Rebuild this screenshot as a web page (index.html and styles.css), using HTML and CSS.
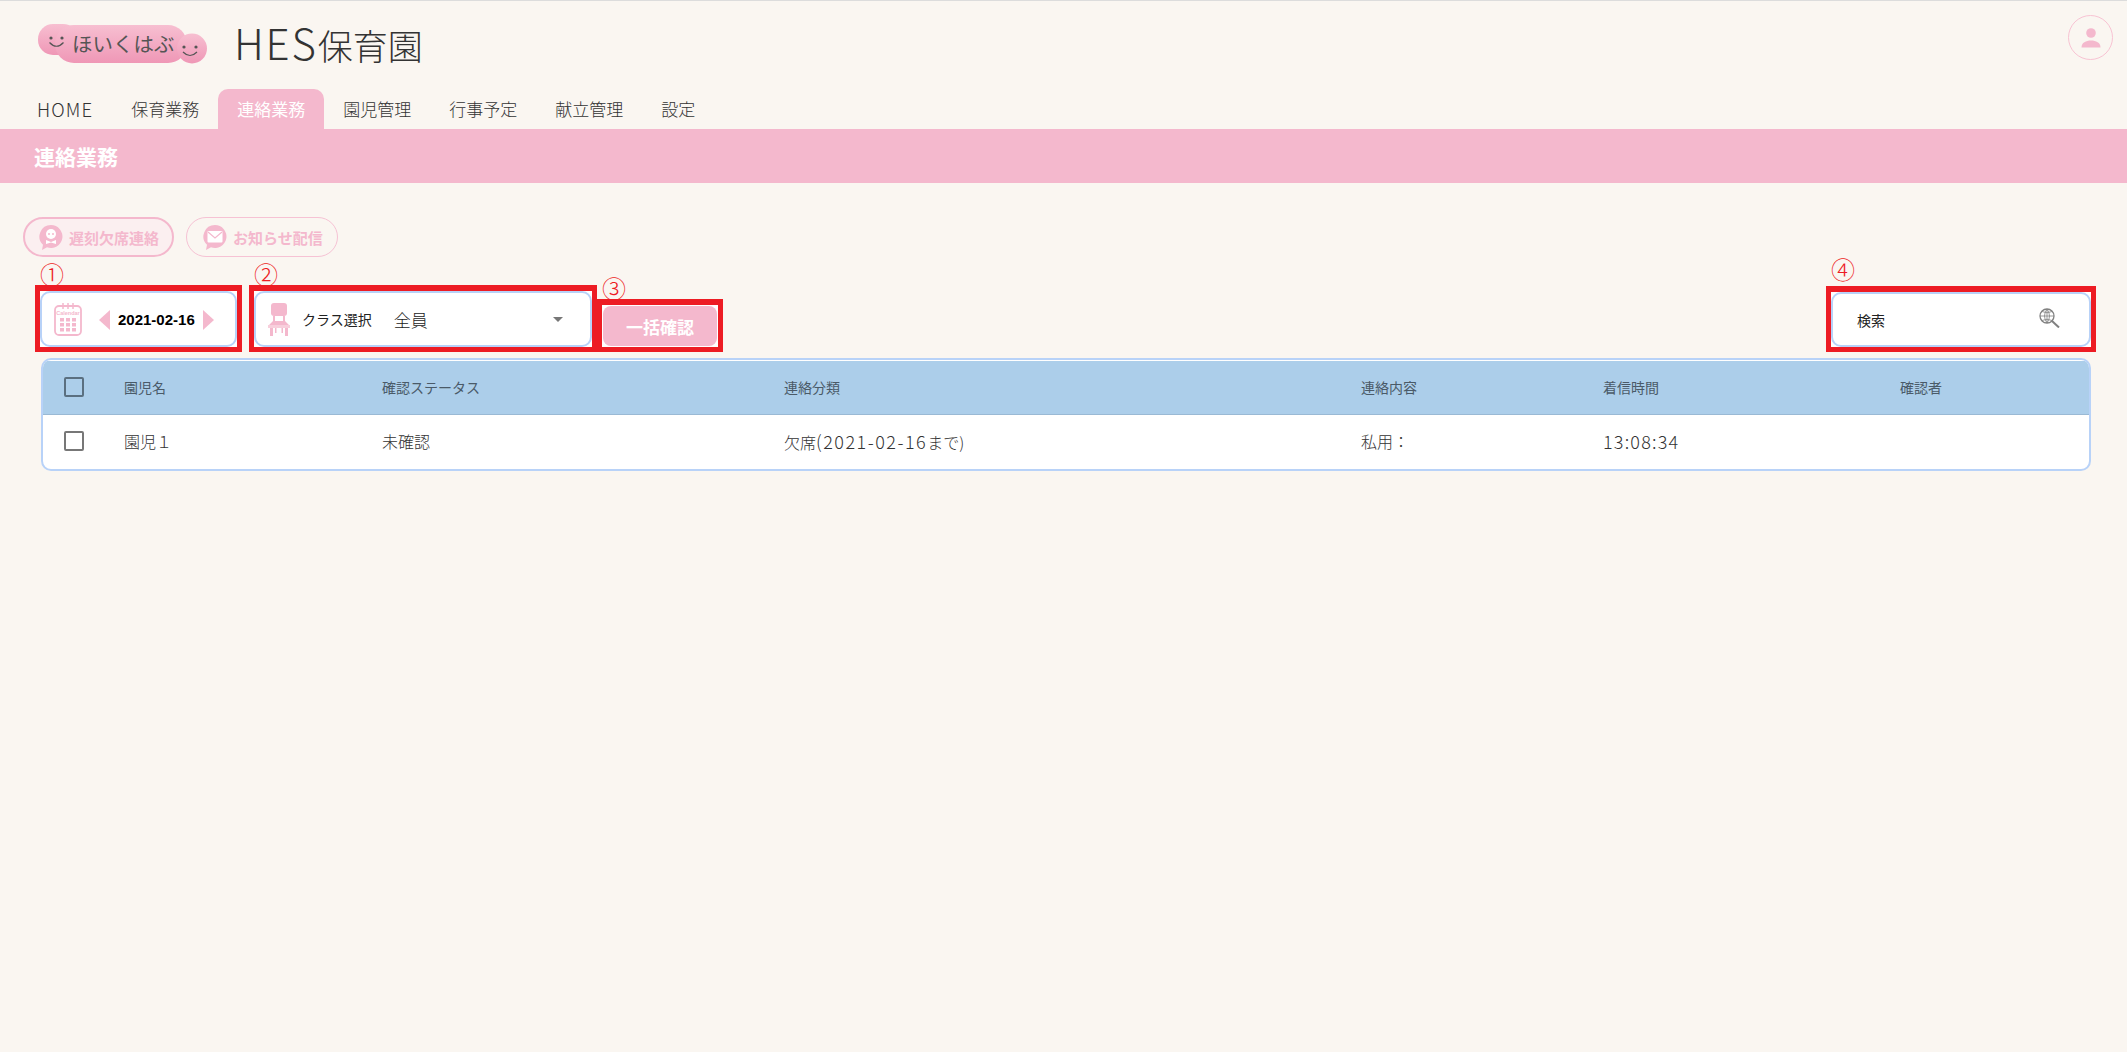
FILE: index.html
```html
<!DOCTYPE html>
<html lang="ja">
<head>
<meta charset="utf-8">
<title>HES保育園</title>
<link rel="stylesheet" href="styles.css">
</head>
<body>
<header class="top">
  <div class="brand">
    <svg class="logo" width="170" height="40" viewBox="0 0 170 40">
      <defs><linearGradient id="lg" x1="0" y1="0" x2="0" y2="1"><stop offset="0" stop-color="#f7bfd1"/><stop offset="1" stop-color="#ef97b6"/></linearGradient></defs>
      <g fill="url(#lg)">
        <rect x="0" y="0" width="40" height="31" rx="15"/>
        <rect x="17" y="1" width="132" height="38" rx="19"/>
        <circle cx="154" cy="24.5" r="15"/>
      </g>
      <g fill="#555"><circle cx="13" cy="14" r="1.6"/><circle cx="24" cy="14" r="1.6"/><circle cx="146" cy="23" r="1.6"/><circle cx="158" cy="23" r="1.6"/></g>
      <g fill="none" stroke="#555" stroke-width="1.2"><path d="M11.5 18.5Q18.5 26 25.5 18.5"/><path d="M145 28Q152 35 159 28"/></g>
      <text class="logo-text" x="34" y="28">ほいくはぶ</text>
    </svg>
    <h1 class="site-name"><span class="site-latin">HES</span>保育園</h1>
  </div>
  <button class="avatar" type="button" aria-label="ユーザー">
    <svg width="20" height="20" viewBox="0 0 20 20"><circle cx="10" cy="5" r="4.8" fill="#f4b8cd"/><path d="M.5 19.5C.5 14.5 5 12.500 10 12.500S19.500 14.500 19.500 19.500Z" fill="#f4b8cd"/></svg>
  </button>
</header>
<nav class="tabs">
  <a class="tab tab-latin">HOME</a>
  <a class="tab">保育業務</a>
  <a class="tab is-active">連絡業務</a>
  <a class="tab">園児管理</a>
  <a class="tab">行事予定</a>
  <a class="tab">献立管理</a>
  <a class="tab">設定</a>
</nav>
<div class="band">連絡業務</div>
<main class="content">
  <div class="actions">
    <button class="pill pill-strong" type="button">
      <svg width="24" height="25" viewBox="0 0 24 25"><path d="M12 0a11.500 11.500 0 1 1-4 22.300L3 25l1-5.200A11.500 11.500 0 0 1 12 0Z" fill="#f4b8cd"/><circle cx="12" cy="9" r="5" fill="#fff"/><path d="M7 15l5 2 5-2v4l-5-1.500L7 19Z" fill="#fff"/><circle cx="10" cy="9" r="1" fill="#f4b8cd"/><circle cx="14" cy="9" r="1" fill="#f4b8cd"/></svg>
      遅刻欠席連絡
    </button>
    <button class="pill" type="button">
      <svg width="24" height="25" viewBox="0 0 24 25"><path d="M12 0a11.500 11.500 0 1 1-4 22.300L3 25l1-5.200A11.500 11.500 0 0 1 12 0Z" fill="#f4b8cd"/><rect x="4.500" y="6" width="15" height="11.500" rx="1" fill="#fff"/><path d="M5 7l7 6 7-6" fill="none" stroke="#f4b8cd" stroke-width="1.200"/></svg>
      お知らせ配信
    </button>
  </div>
  <div class="toolbar">
    <div class="marked">
      <span class="callout">①</span>
      <div class="redbox redbox-date">
        <div class="card date-card">
          <svg class="cal" width="28" height="33" viewBox="0 0 28 33"><rect x="1" y="3" width="26" height="29" rx="4" fill="none" stroke="#f4b8cd" stroke-width="1.800"/><path d="M9 0v6M14 0v6M19 0v6" stroke="#f4b8cd" stroke-width="1.500"/><text class="cal-word" x="14" y="12">Calendar</text><g fill="#f4b8cd"><rect x="6" y="15" width="4" height="3.500"/><rect x="12" y="15" width="4" height="3.500"/><rect x="18" y="15" width="4" height="3.500"/><rect x="6" y="20" width="4" height="3.500"/><rect x="12" y="20" width="4" height="3.500"/><rect x="18" y="20" width="4" height="3.500"/><rect x="6" y="25" width="4" height="3.500"/><rect x="12" y="25" width="4" height="3.500"/><rect x="18" y="25" width="4" height="3.500"/></g></svg>
          <span class="arrow arrow-left"></span>
          <span class="date">2021-02-16</span>
          <span class="arrow arrow-right"></span>
        </div>
      </div>
    </div>
    <div class="marked">
      <span class="callout">②</span>
      <div class="redbox redbox-class">
        <div class="card class-card">
          <svg width="22" height="33" viewBox="0 0 22 33"><rect x="3" y="0" width="16" height="13" rx="3" fill="#f4b8cd"/><path d="M5 13h2v5h8v-5h2v5l5 5H0l5-5Z" fill="#f4b8cd"/><rect x="0" y="22" width="22" height="3" fill="#f8cfdc"/><path d="M2 25h3v8H2ZM17 25h3v8h-3ZM7 25h1.500v5H7ZM13.500 25H15v5h-1.500Z" fill="#f4b8cd"/></svg>
          <span class="class-label">クラス選択</span>
          <span class="class-value">全員</span>
          <span class="caret"></span>
        </div>
      </div>
    </div>
    <div class="marked">
      <span class="callout">③</span>
      <div class="redbox redbox-confirm">
        <button class="confirm" type="button">一括確認</button>
      </div>
    </div>
    <div class="marked marked-search">
      <span class="callout callout-search">④</span>
      <div class="redbox redbox-search">
        <div class="card search-card">
          <span class="search-label">検索</span>
          <svg class="search-icon" width="21" height="20" viewBox="0 0 21 20" fill="none" stroke="#808080"><circle cx="8" cy="8" r="7" stroke-width="1.300"/><path d="M1 8h14M8 1v14M3 3.500q5 2.500 10 0M3 12.500q5-2.500 10 0M8 1q-5 7 0 14M8 1q5 7 0 14" stroke-width=".8"/><path d="M13 13l7 6.500" stroke-width="2"/></svg>
        </div>
      </div>
    </div>
  </div>
  <div class="table-wrap">
    <table class="list">
      <colgroup>
        <col class="c-check"><col class="c-name"><col class="c-status"><col class="c-kind"><col class="c-body"><col class="c-time"><col>
      </colgroup>
      <thead>
        <tr>
          <th><span class="check check-head"></span></th>
          <th>園児名</th><th>確認ステータス</th><th>連絡分類</th><th>連絡内容</th><th>着信時間</th><th>確認者</th>
        </tr>
      </thead>
      <tbody>
        <tr>
          <td><span class="check"></span></td>
          <td>園児１</td><td>未確認</td><td>欠席<span class="wide-digits">(2021-02-16</span>まで)</td><td>私用：</td><td class="time">13:08:34</td><td></td>
        </tr>
      </tbody>
    </table>
  </div>
</main>
</body>
</html>
```
FILE: styles.css
```css
* { box-sizing: border-box; }
html, body { margin: 0; height: 100%; }
body {
  background: #faf6f1;
  border-top: 1px solid #dcdcdc;
  font-family: "Noto Sans CJK JP", "Liberation Sans", sans-serif;
  font-weight: 300;
  color: #333;
  min-height: 1052px;
}
button { font-family: inherit; cursor: pointer; }

.top {
  height: 88px;
  display: flex;
  justify-content: space-between;
  padding: 14px 14px 0 38px;
}
.brand { display: flex; align-items: flex-start; padding-top: 9px; }
.logo { display: block; }
.logo-text { font-size: 20.500px; fill: #555; font-weight: 400; }
.site-name {
  margin: -2px 0 0 26px;
  font-size: 35px;
  line-height: 40px;
  font-weight: 300;
  color: #333;
}
.site-latin { font-size: 42px; letter-spacing: 1.800px; }
.avatar {
  width: 45px;
  height: 45px;
  border: 1px solid #f8c3d3;
  border-radius: 50%;
  background: transparent;
  padding: 0;
  display: flex;
  align-items: center;
  justify-content: center;
}

.tabs { display: flex; padding-left: 18px; height: 40px; }
.tab {
  padding: 0 19px;
  font-size: 17px;
  line-height: 40px;
  color: #333;
  border-radius: 10px 10px 0 0;
}
.tab-latin { font-size: 18.500px; letter-spacing: 1.100px; padding-right: 19px; }
.tab.is-active { background: #f4b8cd; color: #fff; font-weight: 400; }

.band {
  height: 54px;
  background: #f4b8cd;
  color: #fff;
  font-size: 21px;
  font-weight: 700;
  line-height: 54px;
  padding-left: 34px;
}

.content { padding: 34px 36px 0 23px; }
.actions { display: flex; gap: 12px; }
.pill {
  height: 40px;
  width: 152px;
  border: 1px solid #f6c2d4;
  border-radius: 20px;
  background: transparent;
  color: #f4b8cd;
  font-size: 15px;
  font-weight: 700;
  display: flex;
  align-items: center;
  gap: 6px;
  padding: 0 0 0 16px;
  white-space: nowrap;
}
.pill-strong { width: 151px; border: 2px solid #f4b8cd; background: #fbeff0; padding-left: 14px; }

.toolbar {
  display: flex;
  align-items: flex-end;
  margin: 0 -5px 0 12px;
  gap: 7px;
}
.marked { display: flex; flex-direction: column; }
.marked + .marked + .marked { margin-left: -7px; }
.marked-search { margin-left: auto !important; }
.callout {
  color: #ed1c24;
  font-size: 24px;
  line-height: 23px;
  height: 23px;
  padding-left: 5px;
  font-weight: 300;
}
.callout-search { margin-bottom: 6px; }
.redbox { border: 5px solid #ed1c24; border-top-width: 6px; background: #fff; }
.redbox-date { width: 207px; height: 67px; }
.redbox-class { width: 348px; height: 67px; }
.redbox-confirm { width: 126px; height: 53px; padding: 1px; }
.redbox-search { width: 270px; height: 66px; }

.card {
  height: 100%;
  border: 2px solid #b8d2f8;
  border-radius: 10px;
  background: #fff;
  display: flex;
  align-items: center;
}
.date-card { padding: 1px 0 0 12px; }
.arrow { width: 0; height: 0; border-style: solid; border-width: 10px 0; border-color: transparent; }
.arrow-left { border-right: 11px solid #f4b8cd; margin-left: 17px; }
.arrow-right { border-left: 11px solid #f4b8cd; margin-left: 8px; }
.date {
  font-family: "Liberation Sans", sans-serif;
  font-weight: 700;
  font-size: 15px;
  color: #000;
  margin-left: 8px;
}
.cal-word { font-family: "Liberation Sans", sans-serif; font-size: 5.500px; font-weight: 700; fill: #f4b8cd; text-anchor: middle; }

.class-card { padding-left: 12px; }
.class-label { font-size: 14px; color: #222; margin-left: 12px; font-weight: 400; }
.class-value { font-size: 17px; color: #222; margin-left: 22px; }
.caret {
  width: 0; height: 0;
  border-style: solid;
  border-width: 5px 5.500px 0;
  border-color: #777 transparent transparent;
  margin-left: auto;
  margin-right: 27px;
}

.confirm {
  width: 100%;
  height: 100%;
  border: 0;
  border-radius: 8px;
  background: #f4b8cd;
  color: #fff;
  font-size: 17px;
  font-weight: 700;
  padding: 0;
}

.search-card { justify-content: space-between; padding: 0 29px 0 24px; }
.search-label { font-size: 14px; color: #222; font-weight: 400; }
.search-icon { margin-bottom: 4px; }

.table-wrap {
  margin: 6px 0 0 18px;
  border: 2px solid #b8d2f8;
  border-radius: 10px;
  background: #fff;
  padding-top: 1px;
  overflow: hidden;
  height: 113px;
}
.list { width: 100%; border-collapse: collapse; table-layout: fixed; }
.c-check { width: 81px; }
.c-name { width: 258px; }
.c-status { width: 402px; }
.c-kind { width: 577px; }
.c-body { width: 242px; }
.c-time { width: 297px; }
.list th {
  height: 53px;
  background: #acceea;
  border-bottom: 1px solid #9ab9d4;
  color: #4a5a68;
  font-size: 14px;
  font-weight: 400;
  text-align: left;
  padding: 0;
}
.list td { height: 54px; font-size: 16px; color: #333; padding: 0; }
.list td.time { font-size: 18px; letter-spacing: 1.200px; }
.wide-digits { font-size: 18px; letter-spacing: 1.500px; }
.list th:first-child, .list td:first-child { padding-left: 21px; }
.check {
  display: block;
  width: 20px;
  height: 20px;
  border: 2px solid #777;
  border-radius: 2px;
}
.check-head { border-color: #5a6f80; }
```
